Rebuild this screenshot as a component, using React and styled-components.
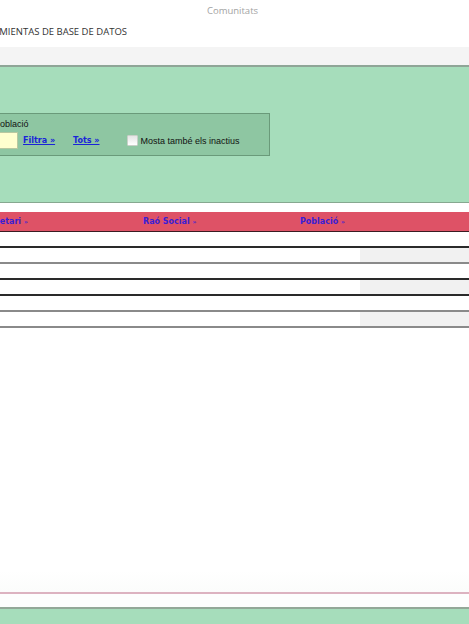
import React from "react";
import styled, { createGlobalStyle } from "styled-components";

const Global = createGlobalStyle`
  html, body {
    margin: 0;
    padding: 0;
    background: #ffffff;
    overflow: hidden;
  }
`;

const headers = [
  { label: "Propietari", width: 167 },
  { label: "Raó Social", width: 157 },
  { label: "Població", width: 200 },
];

const rows = [
  { lines: "dark", shade: false },
  { lines: "light", shade: true },
  { lines: "dark", shade: false },
  { lines: "dark", shade: true },
  { lines: "light", shade: false },
  { lines: "light", shade: true },
];

export default function App() {
  return (
    <Page>
      <Global />
      <TitleBar>Comunitats</TitleBar>
      <RibbonRow>
        <Clip $w={127}>HERRAMIENTAS DE BASE DE DATOS</Clip>
      </RibbonRow>
      <GrayBand />
      <HeaderPanel>
        <FilterBox>
          <Field>
            <FieldLabel>Població</FieldLabel>
            <FieldInput />
          </Field>
          <LinkText href="#">Filtra »</LinkText>
          <LinkText href="#" $gap={18}>Tots »</LinkText>
          <CheckWrap>
            <CheckBox />
            <CheckLabel>Mosta també els inactius</CheckLabel>
          </CheckWrap>
        </FilterBox>
      </HeaderPanel>
      <Table>
        <HeadRow>
          {headers.map((h) => (
            <HeadCell key={h.label} $w={h.width}>
              {h.label} <Arrow>»</Arrow>
            </HeadCell>
          ))}
        </HeadRow>
        {rows.map((r, i) => (
          <Row key={i} $line={r.lines}>
            <Cell $w={360} />
            <Cell $shade={r.shade} />
          </Row>
        ))}
      </Table>
      <Spacer />
      <FooterLine />
      <FooterGap />
      <FooterPanel />
    </Page>
  );
}

const Page = styled.div`
  height: 624px;
  width: 469px;
  display: flex;
  flex-direction: column;
  overflow: hidden;
  font-family: "Liberation Sans", Arial, sans-serif;
`;

const TitleBar = styled.div`
  height: 21px;
  display: flex;
  align-items: center;
  justify-content: center;
  font-family: "Open Sans", "Noto Sans", sans-serif;
  font-size: 9.5px;
  color: #a3a3a3;
  padding-right: 4px;
`;

const RibbonRow = styled.div`
  height: 26px;
  display: flex;
  align-items: center;
  padding-bottom: 5px;
  box-sizing: border-box;
`;

const Clip = styled.div`
  width: ${(p) => p.$w}px;
  overflow: hidden;
  display: flex;
  justify-content: flex-end;
  white-space: nowrap;
  font-family: "Open Sans", "Noto Sans", sans-serif;
  font-size: 9.5px;
  color: #333333;
`;

const GrayBand = styled.div`
  height: 18px;
  background: #f4f4f4;
  border-bottom: 2px solid #8fa597;
`;

const HeaderPanel = styled.div`
  height: 136px;
  background: #a6ddbb;
  border-bottom: 1px solid #86a890;
  padding-top: 46px;
  box-sizing: border-box;
`;

const FilterBox = styled.div`
  width: 326px;
  height: 43px;
  margin-left: -56px;
  box-sizing: border-box;
  background: #8ec6a2;
  border: 1px solid #6a9a7a;
  display: flex;
  align-items: flex-end;
  padding: 0 4px 6px 4px;
`;

const Field = styled.div`
  width: 69px;
  display: flex;
  flex-direction: column;
`;

const FieldLabel = styled.div`
  font-size: 9px;
  color: #111;
  padding-left: 45px;
  margin-bottom: 3px;
  white-space: nowrap;
`;

const FieldInput = styled.div`
  width: 69px;
  height: 17px;
  background: #ffffcf;
  border: 1px solid #b8c8a0;
  box-sizing: border-box;
`;

const LinkText = styled.a`
  font-family: "DejaVu Sans", Verdana, sans-serif;
  font-size: 8px;
  font-weight: bold;
  color: #1a24d8;
  text-decoration: underline;
  margin-left: ${(p) => p.$gap ?? 5}px;
  margin-bottom: 4px;
  white-space: nowrap;
`;

const CheckWrap = styled.label`
  display: flex;
  align-items: center;
  margin-left: 27px;
  margin-bottom: 3px;
`;

const CheckBox = styled.span`
  width: 9px;
  height: 9px;
  background: linear-gradient(#e4e4e4, #ffffff);
  border: 1px solid #c8d0c8;
  border-radius: 1px;
  margin-right: 3px;
`;

const CheckLabel = styled.span`
  font-size: 9px;
  color: #111;
  white-space: nowrap;
`;

const Table = styled.div`
  margin-top: 9px;
`;

const HeadRow = styled.div`
  height: 19px;
  background: #de5266;
  border-bottom: 1px solid #3a1c22;
  display: flex;
  align-items: center;
  margin-left: -24px;
`;

const HeadCell = styled.div`
  width: ${(p) => p.$w}px;
  flex-shrink: 0;
  font-family: "DejaVu Sans", Verdana, sans-serif;
  font-size: 8px;
  font-weight: bold;
  color: #3b1fd3;
  white-space: nowrap;
`;

const Arrow = styled.span`
  font-size: 6px;
`;

const Row = styled.div`
  height: 14px;
  display: flex;
  border-bottom: 2px solid ${(p) => (p.$line === "dark" ? "#2a2a2a" : "#8a8a8a")};
`;

const Cell = styled.div`
  width: ${(p) => (p.$w ? `${p.$w}px` : "auto")};
  flex: ${(p) => (p.$w ? "none" : 1)};
  background: ${(p) => (p.$shade ? "#f1f1f1" : "#ffffff")};
`;

const Spacer = styled.div`
  flex: 1;
  background: linear-gradient(#ffffff 92%, #fbfcfb);
`;

const FooterLine = styled.div`
  height: 2px;
  background: #dcb3c0;
`;

const FooterGap = styled.div`
  height: 13px;
  background: #fdfefd;
  border-bottom: 2px solid #93a898;
`;

const FooterPanel = styled.div`
  height: 15px;
  background: #a6ddbb;
  flex-shrink: 0;
`;
